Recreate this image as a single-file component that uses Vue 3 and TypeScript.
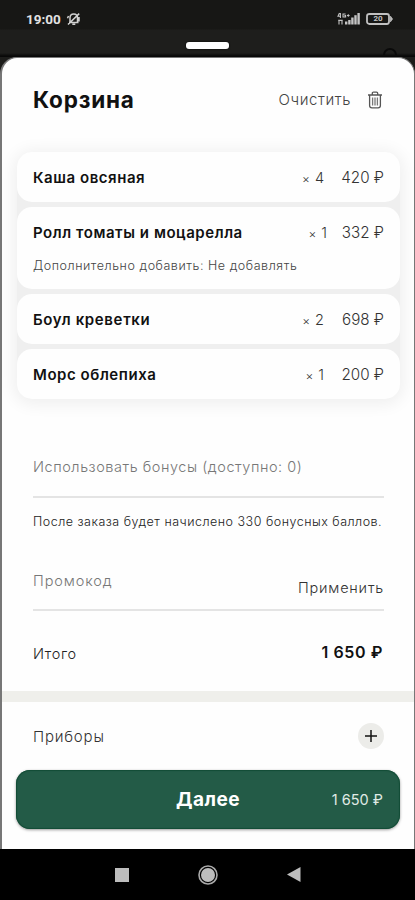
<script setup lang="ts">
interface CartItem {
  name: string
  kind: string
  count: number
  price: string
  note?: string
}

const items: CartItem[] = [
  { name: 'Каша овсяная', kind: 'porridge', count: 4, price: '420 ₽' },
  {
    name: 'Ролл томаты и моцарелла',
    kind: 'roll',
    count: 1,
    price: '332 ₽',
    note: 'Дополнительно добавить: Не добавлять',
  },
  { name: 'Боул креветки', kind: 'bowl', count: 2, price: '698 ₽' },
  { name: 'Морс облепиха', kind: 'drink', count: 1, price: '200 ₽' },
]
const total = '1 650 ₽'
</script>

<template>
  <div class="phone">
    <header class="top">
      <div class="status">
        <div class="status-left">
          <span class="clock">19:00</span>
          <svg class="bell" width="15" height="14" viewBox="0 0 15 14" fill="none" stroke="#d0d0d0" stroke-width="1.5">
            <path d="M3 10.5h9.5M4 10V5.8C4 3.5 5.6 2 7.7 2s3.8 1.5 3.8 3.8V10M6.3 12.2h3M2 12.5 13.2 1.6M1.5 6.2l1-2.2M13 9.5V5" />
          </svg>
        </div>
        <div class="status-right">
          <svg width="24" height="14" viewBox="0 0 24 14">
            <g fill="#c4c4c4">
              <rect x="8" y="9.5" width="2.4" height="3" />
              <rect x="11.2" y="8" width="2.4" height="4.5" />
              <rect x="14.2" y="5.5" width="2.4" height="7" />
              <rect x="17.3" y="3.2" width="2.4" height="9.3" />
              <rect x="20.4" y="1" width="2.4" height="11.5" />
            </g>
            <path d="M2.5 1 1 4.2h3M3.4 1v5M8.6 2H6v3h2.6V3.6H7.4M10 3.5h2.6M11.3 2.2v2.6M2 8v4.4M5 8v4.4M1.2 8.4h4.5" fill="none" stroke="#c4c4c4" stroke-width="1.1" />
          </svg>
          <span class="battery">
            <svg width="27" height="12" viewBox="0 0 27 12" fill="none" stroke="#c0c0c0" stroke-width="1.8">
              <path d="M3.5 1h17.3c1.4 0 2.2.8 2.2 2.2v5.6c0 1.4-.8 2.2-2.2 2.2H3.5C2 11 1 10.2 1 8.8V3.2C1 1.8 2 1 3.5 1Z" />
              <path d="M24.5 3.2v5.6L26.5 6Z" fill="#c0c0c0" stroke-width=".8" />
            </svg>
            <b class="charge">20</b>
          </span>
        </div>
      </div>
      <div class="handle"></div>
      <svg class="behind" width="14" height="7" viewBox="0 0 14 7" fill="none" stroke="#0a0a0a" stroke-width="2">
        <path d="M1 7a6 6 0 0 1 12 0" />
      </svg>
    </header>

    <main class="sheet">
      <div class="heading">
        <h1>Корзина</h1>
        <button class="clear">
          <span class="clear-text">Очистить</span>
          <svg width="16" height="18" viewBox="0 0 16 18" fill="none" stroke="#555" stroke-width="1.3">
            <path d="M1 4h14M5.3 4V2.3c0-.8.4-1.2 1.2-1.2h3c.8 0 1.2.4 1.2 1.2V4" />
            <path d="M2.6 4v10.6c0 1.5.8 2.3 2.3 2.3h6.2c1.5 0 2.3-.8 2.3-2.3V4" />
            <path d="M5.6 6.5v8M8 6.5v8M10.4 6.5v8" stroke="#777" />
          </svg>
        </button>
      </div>

      <ul class="items">
        <li v-for="item in items" :key="item.kind" class="card">
          <div class="row">
            <span class="name" :class="item.kind">{{ item.name }}</span>
            <span class="amount"><i>×</i>{{ item.count }}</span>
            <span class="price" :class="item.kind">{{ item.price }}</span>
          </div>
          <div v-if="item.note" class="note">{{ item.note }}</div>
        </li>
      </ul>

      <div class="field bonus"><span>Использовать бонусы (доступно: 0)</span></div>
      <p class="hint">После заказа будет начислено 330 бонусных баллов.</p>
      <div class="field promo">
        <span class="promo-label">Промокод</span>
        <span class="apply">Применить</span>
      </div>
      <div class="total">
        <span class="total-label">Итого</span>
        <strong>{{ total }}</strong>
      </div>
      <div class="divider"></div>
      <div class="cutlery">
        <span class="cutlery-label">Приборы</span>
        <button class="plus">
          <svg width="12" height="12" viewBox="0 0 12 12" stroke="#111" stroke-width="1.5"><path d="M0 6h12M6 0v12" /></svg>
        </button>
      </div>
      <button class="next">
        <span class="next-text">Далее</span>
        <span class="next-total">{{ total }}</span>
      </button>
    </main>

    <nav class="navbar">
      <svg width="14" height="14" viewBox="0 0 14 14"><rect width="14" height="14" fill="#bdbdbd" /></svg>
      <svg width="20" height="20" viewBox="0 0 20 20" fill="none">
        <circle cx="10" cy="10" r="9" stroke="#aaa" stroke-width="1.6" />
        <circle cx="10" cy="10" r="7" fill="#bdbdbd" />
      </svg>
      <svg width="14" height="15" viewBox="0 0 14 15"><path d="M0 7.5 13.5 0v15Z" fill="#bdbdbd" /></svg>
    </nav>
  </div>
</template>

<style>
body {
  background: #000;
}
</style>

<style scoped>
* {
  box-sizing: border-box;
}
.phone {
  width: 415px;
  height: 900px;
  display: flex;
  flex-direction: column;
  overflow: hidden;
  background: #1c1c1a;
  font-family: Inter, sans-serif;
  color: #111;
  white-space: nowrap;
}
button {
  border: 0;
  padding: 0;
  background: none;
  font: inherit;
  color: inherit;
}
.top {
  height: 57px;
  flex: none;
  position: relative;
  display: flex;
  flex-direction: column;
  align-items: center;
  background: linear-gradient(#171715 0 29px, #1e1e1c 30px 53px, #080808 56px);
}
.status {
  width: 100%;
  height: 42px;
  padding: 0 22px 4px 26px;
  display: flex;
  align-items: center;
  justify-content: space-between;
}
.status-left,
.status-right {
  display: flex;
  align-items: center;
  gap: 5px;
}
.clock {
  font: 700 13.5px/16px Roboto, sans-serif;
  color: #e2e2e2;
}
.battery {
  position: relative;
  display: flex;
}
.charge {
  position: absolute;
  left: 0;
  top: 0;
  width: 24px;
  text-align: center;
  font: 700 8px/12px Roboto, sans-serif;
  color: #c4c4c4;
}
.handle {
  width: 43px;
  height: 7px;
  border-radius: 3px;
  background: #fff;
  box-shadow: 0 0 2px #000;
}
.behind {
  position: absolute;
  right: 18px;
  top: 48px;
}
.sheet {
  height: 792px;
  flex: none;
  display: flex;
  flex-direction: column;
  border: solid #777;
  border-width: 1px 1px 0 2px;
  border-radius: 17px 17px 0 0;
  background: #fefefe;
}
.heading {
  height: 94px;
  padding: 0 31px 11px 31px;
  display: flex;
  align-items: center;
  justify-content: space-between;
}
h1 {
  margin: 0;
  font-size: 22.5px;
  font-weight: 700;
  letter-spacing: 0.8px;
}
.clear {
  display: flex;
  align-items: center;
  gap: 16px;
}
.clear-text {
  font-size: 15px;
  font-weight: 300;
  letter-spacing: 0.6px;
  color: #444;
}
.items {
  margin: 0 14px 0 15px;
  padding: 0;
  display: flex;
  flex-direction: column;
  gap: 5px;
  list-style: none;
  border-radius: 16px;
  background: #efefef;
  box-shadow: 0 2px 16px 4px rgba(0, 0, 0, 0.06);
}
.card {
  padding: 0 16px;
  border-radius: 15px;
  background: #fefefe;
}
.row {
  height: 50px;
  display: flex;
  align-items: center;
}
.name {
  flex: 1;
  font-size: 15px;
  font-weight: 600;
  letter-spacing: 0.55px;
}
.name.bowl {
  letter-spacing: 0.65px;
}
.amount {
  font-size: 14.5px;
  font-weight: 300;
  color: #333;
}
.amount i {
  margin-right: 5px;
  font-size: 12px;
  font-style: normal;
}
.price {
  width: 60px;
  text-align: right;
  font-size: 15.2px;
  font-weight: 300;
  color: #333;
}
.price.roll {
  width: 57px;
}
.note {
  height: 32px;
  font-size: 12.5px;
  font-weight: 300;
  line-height: 17px;
  letter-spacing: 0.55px;
  color: #444;
}
.field {
  margin: 0 30px 0 31px;
  display: flex;
  justify-content: space-between;
  border-bottom: 2px solid #e4e4e4;
  color: #777;
  font-size: 14.5px;
  font-weight: 300;
  letter-spacing: 0.55px;
}
.bonus {
  height: 44px;
  margin-top: 55px;
  line-height: 25px;
}
.hint {
  height: 18px;
  margin: 15px 30px 0 31px;
  font-size: 12.5px;
  font-weight: 300;
  line-height: 18px;
  letter-spacing: 0.5px;
  color: #222;
}
.promo {
  height: 42px;
  margin-top: 38px;
  line-height: 24px;
}
.promo-label {
  letter-spacing: 0.9px;
}
.apply {
  padding-top: 7px;
  letter-spacing: 0.8px;
  color: #333;
}
.total {
  height: 80px;
  padding: 4px 31px 0 31px;
  display: flex;
  align-items: center;
  justify-content: space-between;
  font-size: 14.5px;
  font-weight: 300;
  letter-spacing: 0.6px;
  color: #222;
}
.total strong {
  margin-top: -3px;
  font-size: 16px;
  font-weight: 600;
  color: #111;
}
.divider {
  height: 11px;
  background: #efefeb;
}
.cutlery {
  height: 68px;
  padding: 0 30px 0 31px;
  display: flex;
  align-items: center;
  justify-content: space-between;
  font-size: 15px;
  font-weight: 300;
  letter-spacing: 0.8px;
  color: #333;
}
.plus {
  width: 26px;
  height: 26px;
  display: grid;
  place-items: center;
  border-radius: 50%;
  background: #ecece9;
}
.next {
  height: 59px;
  margin: 0 14px 0 14px;
  padding: 0 17px;
  display: grid;
  grid-template-columns: 1fr auto 1fr;
  align-items: center;
  border-radius: 14px;
  background: #235b47;
  box-shadow: inset 0 0 1px 1px #124c36, 0 1px 3px rgba(0, 0, 0, 0.4);
  color: #fff;
}
.next-text {
  grid-column: 2;
  font-size: 19px;
  font-weight: 700;
  letter-spacing: 0.5px;
}
.next-total {
  text-align: right;
  font-size: 14.5px;
  color: #e0ebe6;
}
.navbar {
  height: 51px;
  flex: none;
  padding: 0 0 0 115px;
  display: flex;
  align-items: center;
  gap: 69px;
  background: #000;
}
</style>
